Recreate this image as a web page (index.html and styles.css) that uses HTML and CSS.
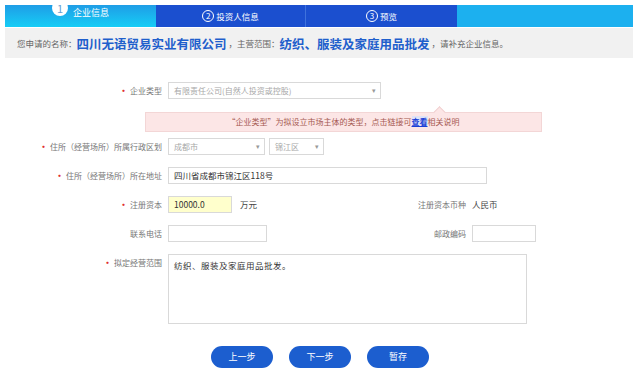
FILE: index.html
```html
<!DOCTYPE html>
<html lang="zh-CN">
<head>
    <meta charset="UTF-8">
    <title>企业信息</title>
    <link rel="stylesheet" href="styles.css">
</head>
<body>
    <div class="page">
        <!-- 步骤条 -->
        <div class="steps">
            <div class="step step-on"><span class="num">1</span><span class="step-txt">企业信息</span></div>
            <div class="step step-dark"><span class="ring">2</span>投资人信息</div>
            <div class="step step-dark step-sep"><span class="ring">3</span>预览</div>
            <div class="step-rest"></div>
        </div>

        <!-- 名称提示 -->
        <div class="namebar">
            您申请的名称：<b class="big">四川无语贸易实业有限公司</b><span class="sep">，主营范围：</span><b class="big">纺织、服装及家庭用品批发</b><span class="sep">，请补充企业信息。</span>
        </div>

        <div class="form">
            <div class="row row-first">
                <div class="lbl"><i class="req">•</i>企业类型</div>
                <div class="sel sel-type">有限责任公司(自然人投资或控股)<span class="arr">▾</span></div>
            </div>

            <div class="tip">
                <span class="tip-arrow"></span>
                “企业类型”为拟设立市场主体的类型，点击链接可<a class="tip-link">查看</a>相关说明
            </div>

            <div class="row row-area">
                <div class="lbl"><i class="req">•</i>住所（经营场所）所属行政区划</div>
                <div class="sel sel-city">成都市<span class="arr">▾</span></div>
                <div class="sel sel-dist">锦江区<span class="arr">▾</span></div>
            </div>

            <div class="row">
                <div class="lbl"><i class="req">•</i>住所（经营场所）所在地址</div>
                <div class="inp inp-addr">四川省成都市锦江区118号</div>
            </div>

            <div class="row">
                <div class="lbl"><i class="req">•</i>注册资本</div>
                <div class="fld">
                    <div class="inp inp-money">10000.0</div>
                    <span class="unit">万元</span>
                </div>
                <div class="lbl2">注册资本币种</div>
                <span class="val">人民币</span>
            </div>

            <div class="row">
                <div class="lbl">联系电话</div>
                <div class="fld">
                    <div class="inp inp-tel"></div>
                </div>
                <div class="lbl2">邮政编码</div>
                <div class="inp inp-zip"></div>
            </div>

            <div class="row">
                <div class="lbl"><i class="req">•</i>拟定经营范围</div>
                <div class="inp area">纺织、服装及家庭用品批发。</div>
            </div>
        </div>

        <div class="btns">
            <a class="btn">上一步</a>
            <a class="btn">下一步</a>
            <a class="btn">暂存</a>
        </div>
    </div>
</body>
</html>
```

FILE: styles.css
```css
body{
    margin: 0;
    background-color: #fff;
    font-family: "Noto Sans CJK SC", "Noto Sans", sans-serif;
    font-size: 8px;
    color: #333;
}
.page{
    width: 628px;
    margin-left: 5px;
    padding-top: 5px;
}

/* 步骤条 */
.steps{
    display: flex;
    height: 22px;
}
.step{
    display: flex;
    justify-content: center;
    align-items: center;
    color: #fff;
    font-size: 8.5px;
}
.step-on{
    width: 151px;
    align-items: flex-start;
    background: linear-gradient(#1f9de6, #16cdf6);
}
.num{
    width: 16px;
    height: 16px;
    margin-top: -5px;
    border-radius: 50%;
    background-color: #fff;
    color: #6a9fd2;
    font-size: 11px;
    line-height: 16px;
    text-align: center;
}
.step-txt{
    margin-left: 5px;
    margin-top: 1px;
    font-size: 9px;
}
.step-dark{
    width: 149px;
    background-color: #1b4fcf;
}
.step-sep{
    width: 151px;
    border-left: 1px solid #3f72dc;
}
.ring{
    width: 10px;
    height: 10px;
    margin-right: 2px;
    border: 1px solid #fff;
    border-radius: 50%;
    font-size: 8px;
    line-height: 10px;
    text-align: center;
}
.step-rest{
    flex: 1;
    background-color: #1cb0ef;
}

/* 名称栏 */
.namebar{
    display: flex;
    align-items: center;
    height: 30px;
    margin-top: 1px;
    padding-left: 12px;
    background-color: #f1f1f1;
    color: #666;
    font-size: 8.5px;
}
.big{
    color: #1f5fcc;
    font-size: 12.5px;
    font-weight: bold;
}
.sep{
    margin-left: 2px;
}

/* 表单 */
.form{
    display: flex;
    flex-direction: column;
}
.row{
    display: flex;
    align-items: flex-start;
    margin-top: 12px;
}
.row-first{
    margin-top: 24px;
}
.row-area{
    margin-top: 6px;
}
.lbl{
    width: 163px;
    box-sizing: border-box;
    padding-right: 6px;
    line-height: 17px;
    text-align: right;
    color: #777;
}
.req{
    margin-right: 2px;
    font-style: normal;
    font-weight: bold;
    font-size: 9px;
    color: #e02f2f;
}
.lbl2{
    width: 48px;
    padding-right: 6px;
    line-height: 17px;
    text-align: right;
    color: #777;
}
.fld{
    display: flex;
    align-items: center;
    width: 250px;
}
.unit, .val{
    line-height: 17px;
    font-size: 8.5px;
    color: #444;
}
.unit{
    margin-left: 8px;
}
.sel, .inp{
    position: relative;
    height: 17px;
    box-sizing: border-box;
    padding-left: 5px;
    border: 1px solid #d9d9d9;
    line-height: 15px;
    background-color: #fff;
}
.sel{
    color: #a8a8a8;
}
.arr{
    position: absolute;
    right: 4px;
    top: 0;
    font-size: 7px;
    color: #999;
}
.sel-type{ width: 213px; }
.sel-city{ width: 97px; }
.sel-dist{ width: 55px; margin-left: 4px; }
.inp{
    font-size: 8.5px;
    color: #333;
}
.inp-addr{ width: 319px; }
.inp-money{
    width: 64px;
    background-color: #ffffcc;
}
.inp-tel{ width: 99px; }
.inp-zip{ width: 64px; }
.area{
    width: 359px;
    height: 70px;
    padding-top: 3px;
    letter-spacing: 0.5px;
}

/* 提示框 */
.tip{
    position: relative;
    width: 397px;
    height: 20px;
    box-sizing: border-box;
    margin-top: 13px;
    margin-left: 140px;
    border: 1px solid #f3d6d6;
    background-color: #fce6e6;
    color: #a65a52;
    line-height: 18px;
    text-align: center;
}
.tip-arrow{
    position: absolute;
    top: -5px;
    left: 289px;
    width: 8px;
    height: 8px;
    border-left: 1px solid #f0d0d0;
    border-top: 1px solid #f0d0d0;
    background-color: #fce6e6;
    transform: rotate(45deg);
}
.tip-link{
    color: #1b40d6;
    font-weight: bold;
    text-decoration: underline;
    background-color: #dfe3f6;
}

/* 按钮 */
.btns{
    display: flex;
    justify-content: center;
    gap: 16px;
    margin-top: 22px;
    padding-left: 2px;
}
.btn{
    width: 62px;
    height: 22px;
    border-radius: 11px;
    background-color: #1c5ecf;
    color: #fff;
    font-size: 9px;
    line-height: 22px;
    text-align: center;
}
```
